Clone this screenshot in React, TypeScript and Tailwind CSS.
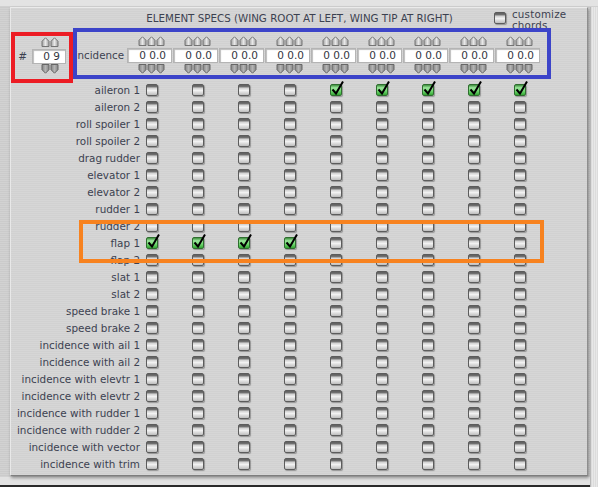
import React from "react";

const ROWS: { label: string; checked: number[] }[] = [
  { label: "aileron 1", checked: [4, 5, 6, 7, 8] },
  { label: "aileron 2", checked: [] },
  { label: "roll spoiler 1", checked: [] },
  { label: "roll spoiler 2", checked: [] },
  { label: "drag rudder", checked: [] },
  { label: "elevator 1", checked: [] },
  { label: "elevator 2", checked: [] },
  { label: "rudder 1", checked: [] },
  { label: "rudder 2", checked: [] },
  { label: "flap 1", checked: [0, 1, 2, 3] },
  { label: "flap 2", checked: [] },
  { label: "slat 1", checked: [] },
  { label: "slat 2", checked: [] },
  { label: "speed brake 1", checked: [] },
  { label: "speed brake 2", checked: [] },
  { label: "incidence with ail 1", checked: [] },
  { label: "incidence with ail 2", checked: [] },
  { label: "incidence with elevtr 1", checked: [] },
  { label: "incidence with elevtr 2", checked: [] },
  { label: "incidence with rudder 1", checked: [] },
  { label: "incidence with rudder 2", checked: [] },
  { label: "incidence with vector", checked: [] },
  { label: "incidence with trim", checked: [] },
];

const COLS = [0, 1, 2, 3, 4, 5, 6, 7, 8];

function Arrows({ n, dir }: { n: number; dir: "up" | "down" }) {
  const up = "M1 9.5 V4.3 L4.5 0.8 L8 4.3 V9.5 Z";
  const down = "M1 0.5 V5.7 L4.5 9.2 L8 5.7 V0.5 Z";
  return (
    <svg width={9 * n} height={10} viewBox={`0 0 ${9 * n} 10`} className="block">
      <defs>
        <linearGradient id={`g-${dir}`} x1="0" y1="0" x2="1" y2="0">
          <stop offset="0" stopColor={dir === "up" ? "#a0a0a0" : "#858585"} />
          <stop offset="0.5" stopColor={dir === "up" ? "#e8e8e8" : "#b4b4b4"} />
          <stop offset="1" stopColor={dir === "up" ? "#a0a0a0" : "#858585"} />
        </linearGradient>
      </defs>
      {Array.from({ length: n }).map((_, i) => (
        <path
          key={i}
          d={dir === "up" ? up : down}
          transform={`translate(${i * 9} 0)`}
          fill={`url(#g-${dir})`}
          stroke={dir === "up" ? "#747474" : "#666666"}
          strokeWidth="1"
        />
      ))}
    </svg>
  );
}

function Field({ value, w }: { value: string; w: string }) {
  return (
    <div
      className={`${w} h-[15px] bg-white border border-[#b4b4b4] shadow-[inset_1px_1px_1px_#bdbdbd] text-right pr-[5px] text-[10.5px] leading-[13px] text-[#33363d]`}
    >
      {value}
    </div>
  );
}

function Check({ on }: { on: boolean }) {
  if (on) {
    return (
      <div className="relative w-[12px] h-[12px] rounded-[2px] border border-[#2f6d2f] bg-[linear-gradient(to_bottom,#3f8f3f_0%,#9be69b_28%,#6ad46a_65%,#34a534_100%)] shadow-[1px_1px_1px_rgba(0,0,0,0.3)]">
        <svg width="14" height="16" viewBox="0 0 14 16" className="absolute left-[0px] top-[-5px] overflow-visible">
          <path d="M1.5 9.5 L5 13.5 L12 1.5" fill="none" stroke="#000" strokeWidth="2" strokeLinejoin="miter" />
        </svg>
      </div>
    );
  }
  return (
    <div className="w-[12px] h-[12px] rounded-[2px] border border-[#5c5c5c] bg-[linear-gradient(to_bottom,#5e5e5e_0%,#707070_16%,#d2d2d2_32%,#f2f2f2_55%,#bdbdbd_100%)] shadow-[1px_1px_1px_rgba(0,0,0,0.3)]" />
  );
}

export default function App() {
  return (
    <div className="relative w-[598px] h-[487px] overflow-hidden font-['DejaVu_Sans',sans-serif] text-[#3c4150] bg-[repeating-linear-gradient(to_bottom,#d2d2d2_0px,#d2d2d2_1px,#cbcbcb_1px,#cbcbcb_2px)]">
      <div className="h-[7px] bg-[#e3e3e3] border-b border-[#d0d0d0]" />
      <div className="flex h-[470px]">
        <div className="w-[10px]" />
        <div className="w-[578px] h-[469px] border border-t-[#ebebeb] border-l-[#e8e8e8] border-r-[#8e8e8e] border-b-[#7e7e7e] shadow-[1px_2px_3px_rgba(0,0,0,0.35)] bg-[repeating-linear-gradient(to_bottom,#d6d6d6_0px,#d6d6d6_1px,#d1d1d1_1px,#d1d1d1_2px)] flex flex-col">
          {/* header */}
          <div className="h-[19px] flex items-start">
            <div className="w-[135px]" />
            <div className="w-[307px] pt-[4px] text-[10.3px] leading-[12px] text-center whitespace-nowrap">
              ELEMENT SPECS (WING ROOT AT LEFT, WING TIP AT RIGHT)
            </div>
            <div className="ml-[41px] pt-[1px] flex items-start gap-[6px]">
              <div className="mt-[3px]">
                <Check on={false} />
              </div>
              <div className="flex flex-col text-[10.3px] leading-[11px] tracking-[0.2px]">
                <span className="h-[11px]">customize</span>
                <span className="h-[11px]">chords</span>
              </div>
            </div>
          </div>
          {/* controls row */}
          <div className="h-[54px] flex items-start">
            <div className="w-[21px] pt-[23px] pr-[5px] text-right text-[10.5px] leading-[12px]">#</div>
            <div className="w-[34px] pt-[10px] flex flex-col items-center">
              <div className="pl-[2px]"><Arrows n={2} dir="up" /></div>
              <div className="h-[2px]" />
              <Field value="0 9" w="w-[34px]" />
              <div className="pl-[2px]"><Arrows n={2} dir="down" /></div>
            </div>
            <div className="w-[61px] pt-[22px] pr-[3px] text-right text-[10.3px] leading-[12px] whitespace-nowrap">
              incidence
            </div>
            {COLS.map((c) => (
              <div key={c} className="w-[46px] pt-[9px] flex flex-col">
                <div className="pl-[11px]"><Arrows n={3} dir="up" /></div>
                <div className="h-[2px]" />
                <Field value="0 0.0" w="w-[45px]" />
                <div className="h-[1px]" />
                <div className="pl-[11px]"><Arrows n={3} dir="down" /></div>
              </div>
            ))}
          </div>
          {/* rows */}
          <div className="flex flex-col">
            {ROWS.map((r) => (
              <div key={r.label} className="h-[17px] flex items-center">
                <div className="w-[132px] pr-[3px] text-right text-[10.4px] leading-[12px] whitespace-nowrap">
                  {r.label}
                </div>
                {COLS.map((c) => (
                  <div key={c} className="w-[46px] pl-[3px] flex items-center">
                    <Check on={r.checked.includes(c)} />
                  </div>
                ))}
              </div>
            ))}
          </div>
        </div>
        <div className="w-[2px]" />
        <div className="w-[8px] h-[487px] bg-[repeating-linear-gradient(to_right,#dcdcdc_0px,#dcdcdc_1px,#e8e8e8_1px,#e8e8e8_2px)] border-l border-[#b8b8b8]" />
      </div>
      <div className="h-[8px] bg-[#e2e2e2]" />
      <div className="h-[2px] bg-[#2a2a2a]" />

      {/* annotation overlays */}
      <div className="absolute left-[11px] top-[32px] w-[62px] h-[51px] border-[4px] border-[#ec1c24]" />
      <div className="absolute left-[73px] top-[28px] w-[478px] h-[51px] border-[4px] border-[#3c44c9]" />
      <div className="absolute left-[79px] top-[220px] w-[465px] h-[43px] border-[4px] border-[#f7821f]" />
    </div>
  );
}
